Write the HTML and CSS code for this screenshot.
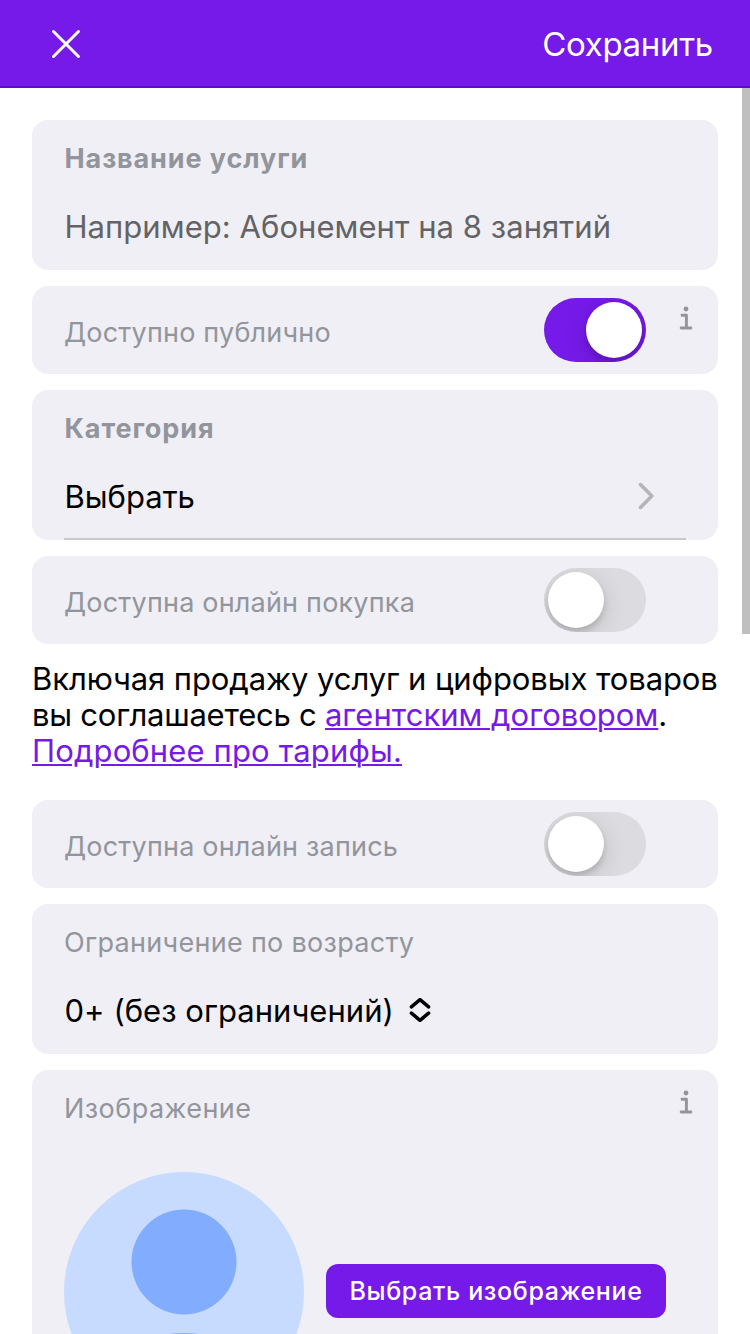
FILE: index.html
```html
<!DOCTYPE html>
<html lang="ru">
<head>
<meta charset="utf-8">
<title>Услуга</title>
<link rel="stylesheet" href="styles.css">
</head>
<body>
<header class="navbar">
  <svg class="close" viewBox="0 0 32 32"><path d="M3.5 3.500 28.500 28.500M28.500 3.500 3.500 28.500"/></svg>
  <span class="save">Сохранить</span>
</header>
<main class="page">
  <section class="card field">
    <div class="label strong">Название услуги</div>
    <div class="value placeholder">Например: Абонемент на 8 занятий</div>
  </section>
  <section class="card row">
    <span class="label">Доступно публично</span>
    <span class="toggle on"><span class="knob"></span></span>
    <svg class="info" viewBox="0 0 16 26"><circle cx="8" cy="3" r="2.400"/><path d="M4 9.200H8.400V22M3.100 22H12.900"/></svg>
  </section>
  <section class="card field">
    <div class="label strong">Категория</div>
    <div class="value select"><span class="choose">Выбрать</span>
      <svg class="chevron" viewBox="0 0 18 28"><path d="M2.500 2.600 13.800 14 2.500 25.400"/></svg>
    </div>
    <div class="divider"></div>
  </section>
  <section class="card row">
    <span class="label">Доступна онлайн покупка</span>
    <span class="toggle"><span class="knob"></span></span>
  </section>
  <p class="terms"><span class="line line-one">Включая продажу услуг и цифровых товаров</span><span class="line line-two">вы соглашаетесь с <a class="link agent">агентским договором</a>.</span><span class="line line-three"><a class="link">Подробнее про тарифы.</a></span></p>
  <section class="card row">
    <span class="label">Доступна онлайн запись</span>
    <span class="toggle"><span class="knob"></span></span>
  </section>
  <section class="card field">
    <div class="label age-label">Ограничение по возрасту</div>
    <div class="value age"><span class="age-text">0+ (без ограничений)</span>
      <svg class="sort" viewBox="0 0 24 28"><path d="M3.400 10.800 12 3.700 20.600 10.800M3.400 17.200 12 24.300 20.600 17.200"/></svg>
    </div>
  </section>
  <section class="card image-card">
    <div class="image-head">
      <span class="label image-label">Изображение</span>
      <svg class="info" viewBox="0 0 16 26"><circle cx="8" cy="3" r="2.400"/><path d="M4 9.200H8.400V22M3.100 22H12.900"/></svg>
    </div>
    <div class="image-body">
      <svg class="avatar" viewBox="0 0 240 162"><circle class="disc" cx="120" cy="120" r="120"/><circle class="head" cx="120" cy="90" r="52.500"/><ellipse class="head" cx="120" cy="220" rx="82" ry="59"/></svg>
      <button class="pick">Выбрать изображение</button>
    </div>
  </section>
</main>
<div class="scrollbar"></div>
</body>
</html>
```
FILE: styles.css
```css
* { box-sizing: border-box; }
html { overflow: hidden; }
body {
  margin: 0;
  width: 750px;
  height: 1334px;
  overflow: hidden;
  position: relative;
  background: #fff;
  color: #000;
  font-family: Inter, "Liberation Sans", sans-serif;
  font-size: 31px;
  white-space: nowrap;
}
.navbar {
  height: 88px;
  padding: 0 37px 0 50px;
  display: flex;
  align-items: center;
  justify-content: space-between;
  background: #751ae8;
  border-bottom: 2px solid #5c0fbd;
  color: #fff;
}
.close { width: 32px; height: 32px; margin-top: 2px; fill: none; stroke: #fff; stroke-width: 3; stroke-linecap: round; }
.save { font-size: 33px; line-height: 40px; margin-top: 2px; letter-spacing: -0.3px; }
.page { height: 1246px; padding: 32px 32px 0; display: flex; flex-direction: column; gap: 16px; }
.card { background: #f0eff5; border-radius: 16px; flex: none; }
.field { height: 150px; padding: 20.5px 32px 0; position: relative; }
.label { color: #92959c; font-size: 27px; line-height: 36px; letter-spacing: 0.2px; }
.strong { font-weight: 700; letter-spacing: 0.9px; padding-left: 0.5px; }
.age-label { letter-spacing: 0.3px; }
.image-label { letter-spacing: 0.45px; }
.value { margin-top: 30px; padding-left: 0.5px; line-height: 40px; }
.placeholder { color: #636366; letter-spacing: 0.05px; }
.row { height: 88px; padding-left: 32px; display: flex; align-items: flex-start; }
.row .label { width: 480px; padding-top: 28.5px; }
.toggle { width: 102px; height: 64px; margin-top: 12px; padding: 4px; border-radius: 32px; background: #dcdbe0; display: flex; overflow: hidden; flex: none; }
.toggle.on { background: #751ae8; justify-content: flex-end; }
.knob { width: 56px; height: 56px; border-radius: 50%; background: #fff; box-shadow: 0 6px 24px rgba(0,0,0,.13), 0 4px 6px rgba(0,0,0,.15); }
.info { width: 16px; height: 26px; fill: #92959c; stroke: #92959c; stroke-width: 2.900; stroke-linecap: round; stroke-linejoin: round; flex: none; }
.info circle { stroke: none; }
.info path { fill: none; }
.row .info { margin: 20px 0 0 32px; }
.select { display: flex; justify-content: space-between; padding-right: 30px; }
.chevron { width: 18px; height: 28px; margin-top: 5px; fill: none; stroke: #b5b5b8; stroke-width: 3.600; stroke-linecap: round; stroke-linejoin: round; }
.divider { position: absolute; left: 32px; right: 32px; bottom: 0; height: 2px; background: #c8c7cc; }
.terms { margin: 0 0 16px; padding-top: 0.5px; height: 108px; line-height: 36px; }
.line { display: block; }
.line-one { letter-spacing: -0.09px; }
.line-two { letter-spacing: -0.24px; }
.agent { letter-spacing: 0; }
.line-three { letter-spacing: 0.14px; }
.link { color: #751ae8; text-decoration: underline; text-decoration-thickness: 2px; text-underline-offset: 2px; }
.age { display: flex; align-items: center; letter-spacing: 0.03px; }
.sort { width: 24px; height: 28px; margin: 0 0 2px 14px; fill: none; stroke: #000; stroke-width: 3.500; stroke-linecap: round; stroke-linejoin: round; }
.image-card { height: 264px; padding: 20px 24px 0 32px; border-radius: 16px 16px 0 0; }
.image-head { display: flex; justify-content: space-between; height: 82px; }
.image-head .label { padding-top: 0.5px; }
.image-body { display: flex; align-items: flex-start; }
.avatar { width: 240px; height: 162px; }
.disc { fill: #c6dbff; }
.head { fill: #82adff; }
.pick { margin: 92px 0 0 22px; width: 340px; height: 54px; padding: 0 0 1px; border: 0; border-radius: 12px; background: #751ae8; color: #fff; font: 500 25px/32px Inter, "Liberation Sans", sans-serif; letter-spacing: 0.65px; }
.scrollbar { position: absolute; top: 88px; right: 0; width: 8px; height: 546px; background: #bfbfbf; }
```
